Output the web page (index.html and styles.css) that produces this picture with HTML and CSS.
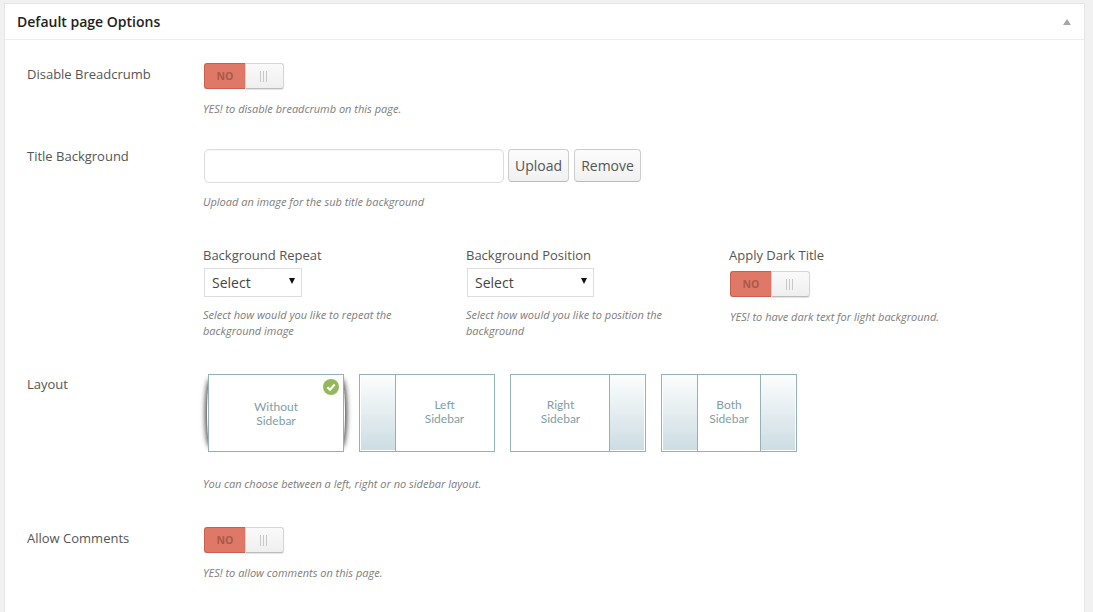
FILE: index.html
```html
<!DOCTYPE html>
<html lang="en">
<head>
<meta charset="utf-8">
<title>Default page Options</title>
<link rel="stylesheet" href="styles.css">
</head>
<body>
<section class="panel">
  <header class="panel-head">
    <h2>Default page Options</h2>
    <span class="collapse"></span>
  </header>
  <div class="panel-body">
    <div class="row row-breadcrumb">
      <div class="label">Disable Breadcrumb</div>
      <div class="field">
        <div class="toggle"><span class="toggle-no">NO</span><span class="toggle-knob"><i></i><i></i><i></i></span></div>
        <p class="hint hint-toggle">YES! to disable breadcrumb on this page.</p>
      </div>
    </div>
    <div class="row row-title">
      <div class="label label-title">Title Background</div>
      <div class="field">
        <div class="upload">
          <input class="text-input" type="text">
          <button class="btn btn-upload" type="button">Upload</button>
          <button class="btn btn-remove" type="button">Remove</button>
        </div>
        <p class="hint hint-upload">Upload an image for the sub title background</p>
      </div>
    </div>
    <div class="columns">
      <div class="col col-repeat">
        <div class="col-label">Background Repeat</div>
        <div class="select select-repeat"><span>Select</span><b></b></div>
        <p class="hint hint-col">Select how would you like to repeat the background image</p>
      </div>
      <div class="col col-position">
        <div class="col-label">Background Position</div>
        <div class="select select-position"><span>Select</span><b></b></div>
        <p class="hint hint-col">Select how would you like to position the background</p>
      </div>
      <div class="col col-dark">
        <div class="col-label">Apply Dark Title</div>
        <div class="toggle toggle-col"><span class="toggle-no">NO</span><span class="toggle-knob"><i></i><i></i><i></i></span></div>
        <p class="hint hint-dark">YES! to have dark text for light background.</p>
      </div>
    </div>
    <div class="row row-layout">
      <div class="label">Layout</div>
      <div class="field">
        <div class="layouts">
          <div class="layout selected">
            <span class="layout-main">Without<br>Sidebar</span>
            <svg class="check" width="16" height="16" viewBox="0 0 16 16"><circle cx="8" cy="8" r="8" fill="#93b85c"/><path d="M4.4 8.2 7 10.7 11.7 5.6" fill="none" stroke="#fff" stroke-width="2.2"/></svg>
          </div>
          <div class="layout">
            <span class="side side-left"></span>
            <span class="layout-main">Left<br>Sidebar</span>
          </div>
          <div class="layout">
            <span class="layout-main">Right<br>Sidebar</span>
            <span class="side side-right"></span>
          </div>
          <div class="layout">
            <span class="side side-left"></span>
            <span class="layout-main">Both<br>Sidebar</span>
            <span class="side side-right"></span>
          </div>
        </div>
        <p class="hint hint-layout">You can choose between a left, right or no sidebar layout.</p>
      </div>
    </div>
    <div class="row row-comments">
      <div class="label">Allow Comments</div>
      <div class="field">
        <div class="toggle"><span class="toggle-no">NO</span><span class="toggle-knob"><i></i><i></i><i></i></span></div>
        <p class="hint hint-toggle">YES! to allow comments on this page.</p>
      </div>
    </div>
  </div>
</section>
</body>
</html>
```
FILE: styles.css
```css
* { box-sizing: border-box; }
html, body { height: 100%; }
body {
  margin: 0;
  padding: 3px 8px 0 4px;
  background: #f1f1f1;
  font-family: "Open Sans", sans-serif;
  overflow: hidden;
  color: #555;
}
.panel {
  background: #fff;
  border: 1px solid #e5e5e5;
  border-bottom: 0;
  height: 100%;
}
.panel-head {
  height: 36px;
  border-bottom: 1px solid #eee;
  display: flex;
  align-items: center;
  justify-content: space-between;
  padding: 0 12px;
}
.panel-head h2 {
  margin: 0;
  font-size: 14px;
  font-weight: 600;
  color: #222;
}
.collapse {
  width: 0;
  height: 0;
  border-left: 4px solid transparent;
  border-right: 4px solid transparent;
  border-bottom: 6px solid #a6a6a6;
  margin-right: 1px;
}
.panel-body { padding-top: 23px; padding-left: 22px; }
.row { display: flex; }
.label {
  width: 177px;
  flex: none;
  font-size: 13px;
  line-height: 24px;
  color: #555;
  margin-top: -1px;
}
.label-title { margin-top: -5px; }
.hint {
  margin: 0 0 0 -1px;
  font-size: 11px;
  line-height: 16px;
  font-style: italic;
  color: #7d7d7d;
}
.toggle {
  display: flex;
  width: 80px;
  height: 26px;
  border-radius: 3px;
}
.toggle-no {
  width: 41px;
  background: #df7866;
  border: 1px solid #c9604f;
  border-right: 0;
  border-radius: 3px 0 0 3px;
  color: #a85a4c;
  font-size: 10.5px;
  font-weight: 700;
  text-align: center;
  line-height: 24px;
}
.toggle-knob {
  width: 39px;
  background: linear-gradient(#fafafa, #efefef);
  border: 1px solid #d5d5d5;
  border-bottom-color: #bbb;
  border-radius: 0 3px 3px 0;
  box-shadow: 0 1px 1px rgba(0,0,0,.12);
  display: flex;
  align-items: center;
  justify-content: center;
  gap: 2px;
  padding-right: 2px;
}
.toggle-knob i { width: 1px; height: 11px; background: #c8c8c8; }
.hint-toggle { margin-top: 12px; }
.row-title { margin-top: 32px; }
.upload { display: flex; align-items: flex-start; }
.text-input {
  width: 300px;
  height: 34px;
  border: 1px solid #ddd;
  border-radius: 5px;
  background: #fff;
  box-shadow: inset 0 1px 2px rgba(0,0,0,.04);
}
.btn {
  height: 33px;
  margin-left: 4px;
  border: 1px solid #ccc;
  border-bottom-color: #bbb;
  border-radius: 4px;
  background: linear-gradient(#fcfcfc, #f1f1f1);
  font: 14px "Open Sans", sans-serif;
  color: #555;
  padding: 0;
}
.btn-upload { width: 61px; }
.btn-remove { width: 67px; margin-left: 5px; }
.hint-upload { margin-top: 11px; }
.columns { display: flex; margin-top: 36px; padding-left: 176px; }
.col-label { font-size: 13px; line-height: 18px; color: #555; }
.col-repeat { width: 263px; }
.col-position { width: 263px; }
.col-dark { width: 230px; }
.select {
  margin: 4px 0 0 1px;
  height: 29px;
  border: 1px solid #ddd;
  background: #fff;
  display: flex;
  align-items: center;
  justify-content: space-between;
  padding: 0 6px 0 7px;
  font-size: 14px;
  color: #444;
}
.select b {
  width: 0;
  height: 0;
  border-left: 3px solid transparent;
  border-right: 3px solid transparent;
  border-top: 6px solid #111;
  margin-top: -3px;
}
.select-repeat { width: 98px; }
.select-position { width: 127px; }
.toggle-col { margin: 7px 0 0 1px; }
.hint-col { margin: 10px 0 0 0; width: 225px; }
.hint-dark { margin: 12px 0 0 1px; }
.row-layout { margin-top: 35px; }
.row-layout .label { margin-top: -2px; }
.layouts { display: flex; gap: 15px; padding-left: 4px; isolation: isolate; }
.layout {
  position: relative;
  display: flex;
  width: 136px;
  height: 78px;
  border: 1px solid #93b2b4;
  background: #fff;
  color: #7f9ea8;
  font-family: Lato, sans-serif;
  font-size: 12px;
  line-height: 14px;
  text-align: center;
}
.layout.selected::before {
  content: "";
  position: absolute;
  top: 6px;
  bottom: 6px;
  left: -2px;
  right: -2px;
  z-index: -1;
  border-radius: 3px / 50%;
  box-shadow: 0 0 5px 2px rgba(0,0,0,.7);
}
.layout-main { flex: 1; align-self: center; position: relative; top: -1px; }
.selected .layout-main { top: 1px; }
.side {
  width: 35px;
  flex: none;
  border: 1px solid #fff;
  background: linear-gradient(#fcfdfd, #ccdde3);
}
.side-left { border-right: 0; box-shadow: 1px 0 0 #93b2b4; }
.side-right { border-left: 0; box-shadow: -1px 0 0 #93b2b4; }
.check { position: absolute; top: 4px; right: 4px; }
.hint-layout { margin-top: 24px; }
.row-comments { margin-top: 35px; }
```
